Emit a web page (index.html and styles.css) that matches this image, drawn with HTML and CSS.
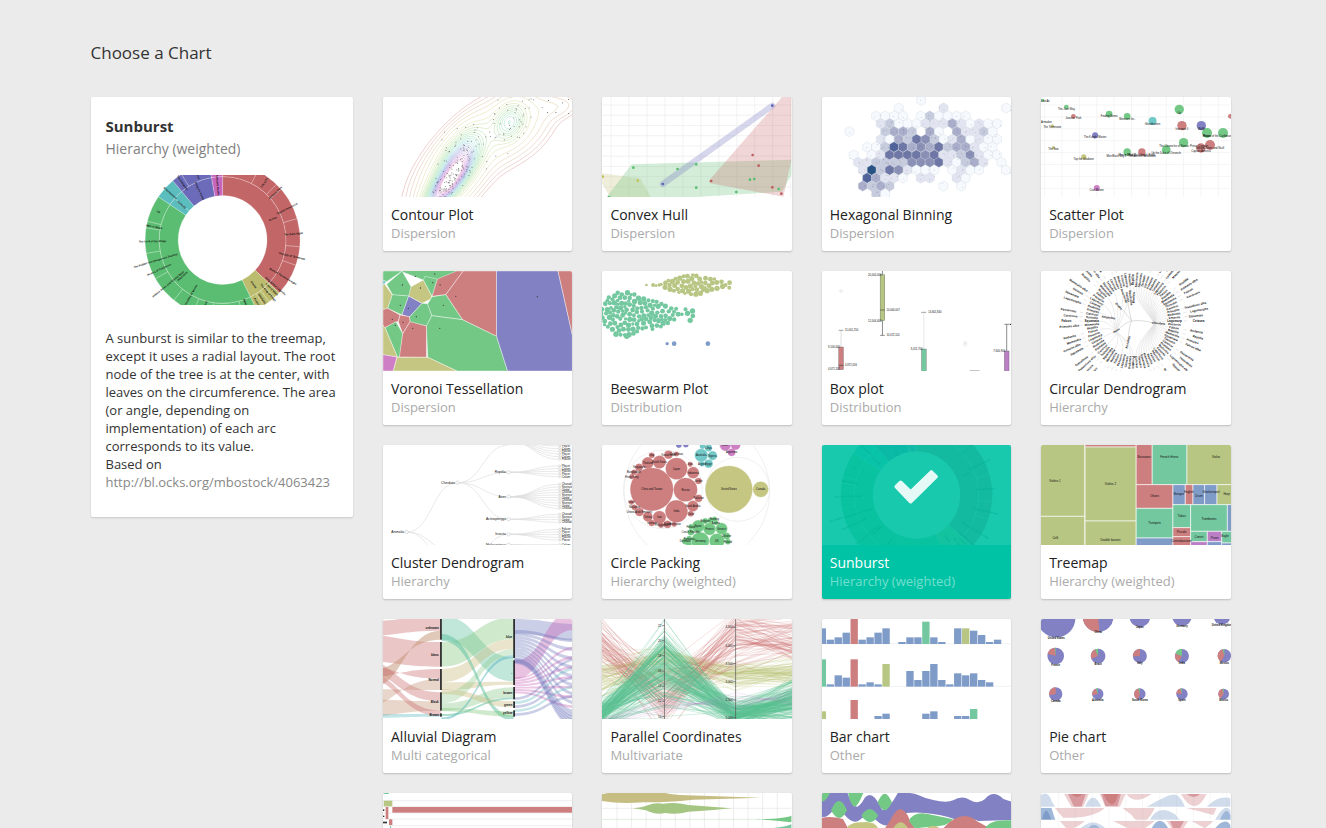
FILE: index.html
```html
<!DOCTYPE html>
<html lang="en">
<head>
<meta charset="utf-8">
<meta name="viewport" content="width=device-width, initial-scale=1">
<title>Choose a Chart</title>
<link rel="stylesheet" href="styles.css">
</head>
<body>
<main class="page">
  <div class="container">
    <h1 class="page-title">Choose a Chart</h1>
    <div class="layout">
      <aside class="detail">
        <h2 class="detail-title">Sunburst</h2>
        <p class="detail-category">Hierarchy (weighted)</p>
        <svg class="detail-chart" data-chart="sunburstLarge" viewBox="78 435 696 390" preserveAspectRatio="xMidYMid slice" aria-hidden="true"></svg>
        <p class="detail-text">A sunburst is similar to the treemap, except it uses a radial layout. The root node of the tree is at the center, with leaves on the circumference. The area (or angle, depending on implementation) of each arc corresponds to its value.<br>Based on <a class="detail-link" href="http://bl.ocks.org/mbostock/4063423">http://bl.ocks.org/mbostock/4063423</a></p>
      </aside>
      <div class="cards">
        <button type="button" class="card"><svg class="thumb" data-chart="contour" viewBox="9 21 567 300" preserveAspectRatio="none" aria-hidden="true"></svg><span class="card-body"><span class="card-title">Contour Plot</span><span class="card-category">Dispersion</span></span></button>
        <button type="button" class="card"><svg class="thumb" data-chart="hull" viewBox="666 21 567 300" preserveAspectRatio="none" aria-hidden="true"></svg><span class="card-body"><span class="card-title">Convex Hull</span><span class="card-category">Dispersion</span></span></button>
        <button type="button" class="card"><svg class="thumb" data-chart="hexbin" viewBox="12 21 567 300" preserveAspectRatio="none" aria-hidden="true"></svg><span class="card-body"><span class="card-title">Hexagonal Binning</span><span class="card-category">Dispersion</span></span></button>
        <button type="button" class="card"><svg class="thumb" data-chart="scatter" viewBox="669 21 567 300" preserveAspectRatio="none" aria-hidden="true"></svg><span class="card-body"><span class="card-title">Scatter Plot</span><span class="card-category">Dispersion</span></span></button>

        <button type="button" class="card"><svg class="thumb" data-chart="voronoi" viewBox="9 18 567 300" preserveAspectRatio="none" aria-hidden="true"></svg><span class="card-body"><span class="card-title">Voronoi Tessellation</span><span class="card-category">Dispersion</span></span></button>
        <button type="button" class="card"><svg class="thumb" data-chart="beeswarm" viewBox="666 18 567 300" preserveAspectRatio="none" aria-hidden="true"></svg><span class="card-body"><span class="card-title">Beeswarm Plot</span><span class="card-category">Distribution</span></span></button>
        <button type="button" class="card"><svg class="thumb" data-chart="boxplot" viewBox="12 18 567 300" preserveAspectRatio="none" aria-hidden="true"></svg><span class="card-body"><span class="card-title">Box plot</span><span class="card-category">Distribution</span></span></button>
        <button type="button" class="card"><svg class="thumb" data-chart="radial" viewBox="669 18 567 300" preserveAspectRatio="none" aria-hidden="true"></svg><span class="card-body"><span class="card-title">Circular Dendrogram</span><span class="card-category">Hierarchy</span></span></button>

        <button type="button" class="card"><svg class="thumb" data-chart="cluster" viewBox="9 15 567 300" preserveAspectRatio="none" aria-hidden="true"></svg><span class="card-body"><span class="card-title">Cluster Dendrogram</span><span class="card-category">Hierarchy</span></span></button>
        <button type="button" class="card"><svg class="thumb" data-chart="packing" viewBox="666 15 567 300" preserveAspectRatio="none" aria-hidden="true"></svg><span class="card-body"><span class="card-title">Circle Packing</span><span class="card-category">Hierarchy (weighted)</span></span></button>
        <button type="button" class="card card-selected" aria-pressed="true"><svg class="thumb" data-chart="sunburst" viewBox="12 15 567 300" preserveAspectRatio="none" aria-hidden="true"></svg><span class="card-overlay"><svg class="check" viewBox="229 90 132 102" aria-hidden="true"><path d="M236 140L249 127L279 156L341 96L355 110L279 185Z" fill="#e5f9f6" stroke="#e5f9f6" stroke-width="11" stroke-linejoin="round"/></svg></span><span class="card-body"><span class="card-title">Sunburst</span><span class="card-category">Hierarchy (weighted)</span></span></button>
        <button type="button" class="card"><svg class="thumb" data-chart="treemap" viewBox="669 15 567 300" preserveAspectRatio="none" aria-hidden="true"></svg><span class="card-body"><span class="card-title">Treemap</span><span class="card-category">Hierarchy (weighted)</span></span></button>

        <button type="button" class="card"><svg class="thumb" data-chart="alluvial" viewBox="9 15 567 300" preserveAspectRatio="none" aria-hidden="true"></svg><span class="card-body"><span class="card-title">Alluvial Diagram</span><span class="card-category">Multi categorical</span></span></button>
        <button type="button" class="card"><svg class="thumb" data-chart="parallel" viewBox="666 15 567 300" preserveAspectRatio="none" aria-hidden="true"></svg><span class="card-body"><span class="card-title">Parallel Coordinates</span><span class="card-category">Multivariate</span></span></button>
        <button type="button" class="card"><svg class="thumb" data-chart="bars" viewBox="12 15 567 300" preserveAspectRatio="none" aria-hidden="true"></svg><span class="card-body"><span class="card-title">Bar chart</span><span class="card-category">Other</span></span></button>
        <button type="button" class="card"><svg class="thumb" data-chart="pies" viewBox="669 15 567 300" preserveAspectRatio="none" aria-hidden="true"></svg><span class="card-body"><span class="card-title">Pie chart</span><span class="card-category">Other</span></span></button>

        <button type="button" class="card" aria-label="Gantt chart"><svg class="thumb" data-chart="gantt" viewBox="9 24 567 300" preserveAspectRatio="none" aria-hidden="true"></svg></button>
        <button type="button" class="card" aria-label="Area graph"><svg class="thumb" data-chart="area" viewBox="666 24 567 300" preserveAspectRatio="none" aria-hidden="true"></svg></button>
        <button type="button" class="card" aria-label="Streamgraph"><svg class="thumb" data-chart="stream" viewBox="12 24 567 300" preserveAspectRatio="none" aria-hidden="true"></svg></button>
        <button type="button" class="card" aria-label="Horizon graph"><svg class="thumb" data-chart="horizon" viewBox="669 24 567 300" preserveAspectRatio="none" aria-hidden="true"></svg></button>
      </div>
    </div>
  </div>
</main>
<script src="charts.js"></script>
</body>
</html>
```
FILE: styles.css
```css
* { box-sizing: border-box; }
body {
  margin: 0;
  background: #ebebeb;
  color: #333;
  font-family: "Open Sans", "Liberation Sans", sans-serif;
  font-size: 14px;
}
.page {
  height: 100vh;
  overflow: hidden;
  padding: 40px 20px 0 15px;
}
.container {
  max-width: 1140px;
  margin: 0 auto;
}
.page-title {
  margin: 0 0 31px;
  font-size: 17px;
  font-weight: 400;
  line-height: 26px;
}
.layout {
  display: grid;
  grid-template-columns: repeat(12, minmax(0, 1fr));
  column-gap: 30px;
  align-items: start;
}
.detail {
  grid-column: span 3;
  padding: 18px 15px 26px;
  background: #fff;
  border-radius: 2px;
  box-shadow: 0 1px 2px rgba(0, 0, 0, .15);
}
.detail-title {
  margin: 0;
  font-size: 15px;
  font-weight: 700;
  line-height: 22px;
}
.detail-category {
  margin: 0 0 14px;
  color: #808080;
  line-height: 24px;
}
.detail-chart {
  display: block;
  width: 100%;
  height: 130px;
}
.detail-text {
  margin: 24px 0 0;
  font-size: 13px;
  line-height: 18px;
}
.detail-link {
  color: #888;
  text-decoration: none;
}
.cards {
  grid-column: span 9;
  display: grid;
  grid-template-columns: repeat(4, minmax(0, 1fr));
  gap: 20px 30px;
}
.card {
  position: relative;
  display: flex;
  flex-direction: column;
  justify-content: flex-start;
  min-height: 154px;
  padding: 0;
  border: 0;
  border-radius: 2px;
  overflow: hidden;
  background: #fff;
  color: #222;
  font: inherit;
  text-align: left;
  box-shadow: 0 1px 2px rgba(0, 0, 0, .2);
  cursor: pointer;
}
.thumb {
  display: block;
  width: 100%;
  height: 100px;
}
.card-body {
  display: flex;
  flex-direction: column;
  padding: 8px;
  line-height: 19px;
}
.card-category {
  color: #aaa;
  font-size: 13px;
}
.card-selected {
  background: #00c3a5;
  color: #fff;
}
.card-selected .thumb { background: #fff; }
.card-selected .card-category { color: #73dfcf; }
.card-overlay {
  position: absolute;
  top: 0;
  left: 0;
  width: 100%;
  height: 100px;
  display: flex;
  align-items: center;
  justify-content: center;
  padding-bottom: 16px;
  background: rgba(0, 195, 165, .9);
}
.check {
  width: 44px;
  height: 34px;
}
text {
  font-family: "Liberation Sans", sans-serif;
  font-size: 10px;
  fill: #111;
}
```
FILE: charts.js
```js
// Draws the chart previews into every svg that has a data-chart attribute.
let seed = 7;
const rnd = () => (seed = (seed * 16807) % 2147483647) / 2147483647;
const gauss = () => rnd() + rnd() + rnd() + rnd() - 2;
const line = (x1, y1, x2, y2, c = '#e6e6e6', w = 2) => `<path d="M${x1} ${y1}L${x2} ${y2}" stroke="${c}" stroke-width="${w}" fill="none"/>`;
const circle = (x, y, r, f, extra = '') => `<circle cx="${x}" cy="${y}" r="${r}" fill="${f}" ${extra}/>`;
const rect = (x, y, w, h, f, extra = '') => `<rect x="${x}" y="${y}" width="${w}" height="${h}" fill="${f}" ${extra}/>`;
const poly = (pts, f, extra = '') => `<polygon points="${pts}" fill="${f}" ${extra}/>`;
const path = (d, f, extra = '') => `<path d="${d}" fill="${f}" ${extra}/>`;
const text = (x, y, s, anchor = 'middle', extra = '') => `<text x="${x}" y="${y}" text-anchor="${anchor}" ${extra}>${s}</text>`;
const polar = (cx, cy, r, a) => [cx + r * Math.sin(a * Math.PI / 180), cy - r * Math.cos(a * Math.PI / 180)];
const grid = (xs, ys, x0, y0, c = '#ececec') => xs.map(x => line(x, y0, x, y0 + 300, c)).join('') + ys.map(y => line(x0, y, x0 + 567, y, c)).join('');
const range = (a, b, s) => { const out = []; for (let v = a; v < b; v += s) out.push(v); return out; };
const RED = '#cd7e7f', GREEN = '#73c886', BLUE = '#8181c4', OLIVE = '#c6c683', TEAL = '#73c8c8', MINT = '#73c8a0', STEEL = '#7f9bc8', PINK = '#cd81c4', LIME = '#b7c683', PLUM = '#bb7fc6';

function arc(cx, cy, r0, r1, a0, a1, fill, extra = '') {
  const big = a1 - a0 > 180 ? 1 : 0;
  const [ax, ay] = polar(cx, cy, r1, a0), [bx, by] = polar(cx, cy, r1, a1);
  const [qx, qy] = polar(cx, cy, r0, a1), [dx, dy] = polar(cx, cy, r0, a0);
  return path(`M${ax} ${ay}A${r1} ${r1} 0 ${big} 1 ${bx} ${by}L${qx} ${qy}A${r0} ${r0} 0 ${big} 0 ${dx} ${dy}Z`, fill, extra);
}
function radialText(cx, cy, r, a, s, size = 10) {
  const [x, y] = polar(cx, cy, r, a);
  return text(x, y + 3, s, 'middle', `transform="rotate(${a > 180 ? a + 90 : a - 90} ${x} ${y})" style="font-size:${size}px;font-weight:700"`);
}
function sunburst(cx, cy, k) {
  const groups = [[0, 133, '#c36667'], [133, 154, '#bcbc6f'], [154, 304, '#5bbd71'], [304, 320, '#5bbdbd'], [320, 350, '#6b6bb9'], [350, 360, '#c667bd']];
  let s = '';
  for (const [a, b, c] of groups) s += arc(cx, cy, 133 * k, 190 * k, a, b, c, 'stroke="#fff" stroke-opacity=".35" stroke-width="2"') + arc(cx, cy, 190 * k, 232 * k, a, b, c, 'stroke="#fff" stroke-opacity=".35" stroke-width="2"');
  for (const a of [27, 44, 49, 74, 95, 109, 138, 143, 148, 165, 188, 202, 219, 240, 260, 279, 284, 328]) {
    const p = polar(cx, cy, 190 * k, a), q = polar(cx, cy, 232 * k, a);
    s += line(p[0], p[1], q[0], q[1], '#ffffff99');
  }
  s += line(...polar(cx, cy, 133 * k, 311), ...polar(cx, cy, 190 * k, 311), '#ffffff99');
  const labels = [[36, 212, 'Life of Pi'], [48, 212, 'Jurassic Park'], [64, 214, 'Captain America II'], [67, 163, 'Action'], [85, 213, 'The Dark Night'], [103, 213, 'The Day of Tomorrow'], [121, 211, 'Batman The Dark Knight'], [131, 210, 'King Arthur Legends'], [135, 209, 'Lord of Wars'], [139, 208, 'The King of Kings'], [145, 163, 'Drama'], [146, 212, 'Gladiator'], [151, 215, 'Australia'], [160, 200, 'Avatar'], [195, 195, 'Up'], [210, 194, 'Chronicles of Narnia'], [228, 162, 'Adventure'], [231, 210, 'Indiana Jones and Crystal Skull'], [245, 210, 'Pirates of Caribbean'], [253, 210, 'The Hobbit: An Unexpected Journey'], [269, 210, 'The Lord of the Rings'], [281, 208, 'Men in Black'], [294, 210, 'Up'], [312, 210, 'Ghostbusters'], [311, 162, 'Comedy'], [325, 209, 'The Hangover'], [335, 162, 'Kung Fu Panda'], [339, 206, 'Shrek'], [355, 165, 'Fantastic Beasts']];
  for (const [a, r, t] of labels) s += radialText(cx, cy, r * k, a, t, 8);
  return s;
}

const charts = {
  sunburstLarge: () => sunburst(427, 630, 1),
  sunburst: () => sunburst(295, 165, .98),

  contour() {
    const bumps = [[195, 290, 58, 22, -52, 1.1], [240, 208, 60, 30, -60, .8], [225, 240, 92, 46, -52, .32], [388, 95, 36, 26, -65, .45], [388, 108, 78, 50, -38, .22], [535, 50, 42, 22, -10, .05]];
    const f = (x, y) => bumps.reduce((sum, [cx, cy, a, b, t, w]) => {
      const c = Math.cos(t * Math.PI / 180), n = Math.sin(t * Math.PI / 180), u = (x - cx) * c + (y - cy) * n, v = (y - cy) * c - (x - cx) * n;
      return sum + w * Math.exp(-(u * u / a / a + v * v / b / b) / 2);
    }, 0);
    let s = '';
    const step = 9;
    for (let i = 0; i < 26; i++) {
      const level = i < 6 ? .018 * Math.pow(1.6, i) : .19 + (i - 5) * .06;
      let d = '';
      for (let x = 0; x < 590; x += step) for (let y = 12; y < 330; y += step) {
        const p = [[x, y], [x + step, y], [x + step, y + step], [x, y + step]], v = p.map(q => f(...q) - level), cuts = [];
        for (let e = 0; e < 4; e++) {
          const g = (e + 1) % 4;
          if (v[e] * v[g] < 0) { const t = v[e] / (v[e] - v[g]); cuts.push(`${(p[e][0] + t * (p[g][0] - p[e][0])).toFixed(1)} ${(p[e][1] + t * (p[g][1] - p[e][1])).toFixed(1)}`); }
        }
        if (cuts.length > 1) d += `M${cuts[0]}L${cuts[1]}`;
      }
      s += path(d, 'none', `stroke="hsl(${i * 13},50%,60%)" stroke-opacity=".45" stroke-width="2"`);
    }
    for (let i = 0; i < 220; i++) {
      const [cx, cy, a, b] = i < 110 ? [205, 275, 70, 22] : i < 165 ? [240, 180, 75, 50] : [385, 105, 110, 55];
      const u = gauss() * a, v = gauss() * b;
      s += rect((cx + u * .6 + v * .8).toFixed(0), (cy - u * .8 + v * .6).toFixed(0), 3, 3, '#333', 'opacity=".5"');
    }
    return s + [[503, 30], [525, 66], [545, 37], [563, 27], [563, 69], [500, 66]].map(p => rect(p[0], p[1], 3, 3, '#777')).join('');
  },

  hull() {
    let s = grid(range(693, 1233, 53.8), range(45, 321, 30.7), 666, 21);
    s += poly('666,250 780,265 812,321 690,321 666,280', '#c6c683', 'opacity=".3"');
    s += poly('755,223 1233,209 1233,255 1205,305 950,321 680,321', '#6cc47f', 'opacity=".3"');
    s += poly('985,273 1205,21 1233,21 1233,210 1209,320 990,280', '#c86668', 'opacity=".27"');
    s += '<path d="M848 282L1176 47" stroke="#8181c4" stroke-opacity=".32" stroke-width="18" stroke-linecap="round"/>';
    for (const p of [[760, 233], [892, 237], [948, 223], [948, 293], [1068, 306], [1109, 269], [1122, 267], [1195, 297], [687, 321]]) s += circle(...p, 4, '#54be6d');
    for (const p of [[1117, 195], [1135, 227], [1176, 292], [1203, 311], [993, 273]]) s += circle(...p, 4, '#be5a5c');
    return s + circle(848, 282, 4, '#5e5eb4') + circle(1176, 47, 4, '#5e5eb4') + circle(668, 260, 4, '#c2c255') + circle(773, 272, 4, '#c2c255');
  },

  hexbin() {
    const shades = ['', '#f6faff', '#e2e5f1', '#c6cbde', '#aaaecb', '#8b90b7', '#6e77a6', '#50639a', '#295284'];
    const rows = [[31, 309, '1'], [54, 242, '1....2......1'], [78, 174, '1111.131111'], [101, 188, '23111222421211'], [125, 94, '1...3443.41.42231'], [148, 188, '21436531241211'], [171, 147, '113764546344211'], [195, 107, '1.126666562235211'], [217, 120, '223333555621342.1'], [240, 134, '283652111.1211..1'], [264, 147, '74221.22..21'], [288, 134, '4343.....1.1'], [311, 174, '31']];
    let s = '';
    for (const [y, x0, cells] of rows) [...cells].forEach((c, i) => {
      if (c === '.') return;
      const x = x0 + i * 26.8;
      s += poly([0, 60, 120, 180, 240, 300].map(a => polar(x, y, 15.5, a).map(v => v.toFixed(1)).join(',')).join(' '), shades[c], 'stroke="#ccd6da" stroke-width="1"');
      for (let n = 0; n < Math.min(+c, 3); n++) s += rect((x + gauss() * 11).toFixed(0), (y + gauss() * 10).toFixed(0), 2, 2, '#555', 'opacity=".5"');
    });
    return s;
  },

  scatter() {
    let s = grid(range(680, 1236, 52), range(45, 321, 35.7), 669, 21, '#f0f0f0');
    const dots = [[674, 31, 5, GREEN, 'The Last Ati'], [745, 51, 7, GREEN, 'The Jazz Way'], [766, 79, 7, RED, 'Jurassic Park'], [873, 72, 10, GREEN, 'Finding Nemo'], [927, 79, 10, GREEN, 'Monsters Inc.'], [1083, 58, 14, GREEN, 'Up'], [1003, 93, 12, TEAL, 'Ghostbusters'], [1091, 107, 14, RED, 'Iron man II'], [1149, 107, 14, BLUE, 'WallE'], [1236, 79, 7, RED, ''], [703, 108, 5, OLIVE, 'The Terminator'], [831, 136, 9, BLUE, 'The Kungfu Master'], [706, 173, 5, OLIVE, 'The Vow'], [797, 201, 8, OLIVE, 'Top the Gladiator'], [927, 186, 11, GREEN, 'Men in Black 3'], [971, 186, 11, RED, 'The Dark Knight Rises'], [1044, 179, 13, GREEN, 'Up the Duke of Chronicle'], [1096, 158, 14, GREEN, 'The Chronicles of Narnia: Prince Caspian'], [1166, 129, 15, GREEN, 'Brave'], [1214, 129, 15, GREEN, 'Pirates of the Caribbean: Stranger'], [1148, 174, 14, RED, 'Captain America'], [1175, 165, 15, RED, 'Indiana Jones and Skull'], [836, 294, 9, PINK, 'Cast Master']];
    for (const [x, y, r, c] of dots) s += circle(x, y, r, c);
    for (const [x, y, r, , t] of dots) if (t) s += text(x, y + r * .7 + 3, t, 'middle', 'style="font-size:8px"');
    return s + text(669, 98, 'Armadon', 'start', 'style="font-size:8px"') + text(865, 202, 'Men Black Sky 2 : The Ancient Revolution', 'start', 'style="font-size:8px"');
  },

  voronoi() {
    const e = 'stroke="#ffffff" stroke-opacity=".6" stroke-width="2"';
    const cells = [['0,10 250,10 200,38 155,92 130,45 60,18 9,55', GREEN], ['9,18 66,18 20,50 9,45', GREEN], ['66,18 20,58 38,90 90,94 93,65', GREEN], ['9,50 37,90 23,130 9,136', OLIVE], ['37,89 86,93 66,150 23,130', GREEN], ['86,93 126,115 88,156 66,149', BLUE], ['93,65 130,45 155,93 152,102 126,115 86,93', OLIVE], ['130,45 135,34 172,42 156,94', GREEN], ['172,42 230,18 249,18 197,89 156,94', RED], ['249,18 349,18 349,214 247,164 197,89', RED], ['156,95 197,89 247,164 155,152 142,118', GREEN], ['126,115 142,116 155,152 140,183 90,172 88,156', GREEN], ['155,152 247,164 349,214 382,318 230,318 143,277 139,183', GREEN], ['349,18 533,18 576,210 576,318 382,318 349,214', BLUE], ['533,18 576,18 576,210', RED], ['9,134 23,130 60,150 55,168 15,188 9,190', RED], ['60,150 88,155 90,170 68,206 55,170', RED], ['15,188 48,170 68,206 60,276 52,276', GREEN], ['9,180 15,188 52,276 9,270', OLIVE], ['68,206 90,170 139,183 139,277 58,276', RED], ['9,269 51,276 40,318 9,318', '#cd7ec4'], ['51,277 143,277 230,318 40,318', OLIVE], ['9,46 20,50 9,60', TEAL]];
    let s = cells.map(([p, c]) => poly(p, c, e)).join('');
    for (const p of [[106, 34], [164, 27], [67, 60], [121, 69], [158, 53], [180, 60], [227, 94], [471, 95], [61, 121], [85, 130], [190, 121], [109, 155], [37, 163], [69, 172], [46, 181], [98, 190], [179, 190]]) s += circle(...p, 2, '#444');
    return s;
  },

  beeswarm() {
    let s = '';
    const swarm = (inside, color, x0, x1, y0, y1) => {
      const put = [];
      for (const size of [7, 6, 5]) for (let i = 0; i < 9000; i++) {
        const x = x0 + rnd() * (x1 - x0), y = y0 + rnd() * (y1 - y0), r = size + rnd() * 1;
        if (inside(x, y) && (size < 7 || put.length < 55) && put.every(p => Math.hypot(p[0] - x, p[1] - y) > p[2] + r - 2)) { put.push([x, y, r]); s += circle(x.toFixed(1), y.toFixed(1), r.toFixed(1), color); }
      }
    };
    const edge = (pts, x) => { for (let i = 1; i < pts.length; i++) if (x <= pts[i][0]) { const [a, b] = [pts[i - 1], pts[i]]; return a[1] + (b[1] - a[1]) * (x - a[0]) / (b[0] - a[0]); } return 145; };
    const top = [[660, 125], [700, 82], [750, 80], [810, 102], [880, 132], [905, 145]], bottom = [[660, 165], [700, 208], [745, 215], [790, 190], [840, 188], [905, 150]];
    swarm((x, y) => y > edge(top, x) && y < edge(bottom, x), MINT, 660, 905, 75, 220);
    swarm((x, y) => Math.abs(x - 940) / 92 + ((y - 59) / 30) ** 2 < 1 || (((x - 930) / 68) ** 2 + ((y - 59) / 27) ** 2 < 1), LIME, 840, 1040, 28, 90);
    for (const p of [[916, 133, 6], [922, 145, 8], [937, 138, 8], [938, 153, 7], [930, 166, 8], [740, 214, 8], [708, 208, 8], [817, 192, 6], [888, 131, 6]]) s += circle(...p, MINT);
    for (const p of [[799, 60, 4], [819, 60, 6], [828, 62, 4], [837, 60, 5], [843, 58, 5], [1036, 60, 6], [1048, 53, 7], [1047, 68, 6]]) s += circle(...p, LIME);
    return s + circle(861, 236, 5, STEEL) + circle(882, 236, 7, STEEL) + circle(983, 236, 7, STEEL);
  },

  boxplot() {
    const b = (x, y, h, c) => rect(x, y, 14, h, c, 'stroke="#555" stroke-width="1"');
    const t = (x, y, s) => text(x, y, s, 'start', 'style="font-size:8px"');
    let s = line(193, 18, 193, 211, '#555') + line(186, 211, 200, 211, '#555') + line(69, 196, 69, 246, '#ccc') + line(62, 196, 76, 196, '#777') + line(317, 142, 317, 252, '#ddd') + line(309, 142, 324, 142, '#777') + line(565, 178, 565, 258, '#555') + line(558, 178, 572, 178, '#555');
    s += b(186, 29, 138, LIME) + b(62, 246, 68, RED) + b(310, 252, 70, MINT) + b(558, 258, 62, PLUM) + line(186, 135, 200, 135, '#444') + line(62, 301, 76, 301, '#444');
    s += t(150, 32, '20,000,000') + t(150, 170, '12,004,400') + t(205, 138, '14,000,007') + t(205, 214, '10,072,114') + t(81, 199, '11,001,250') + t(330, 145, '14,601,840') + t(30, 249, '9,106,002') + t(30, 316, '4,672,107') + t(81, 304, '4,872,056') + t(278, 255, '8,411,700') + t(525, 260, '7,600,900') + line(574, 178, 579, 178, '#333', 4) + line(454, 317, 484, 317, '#999');
    for (const p of [[69, 78], [441, 233], [441, 239]]) s += circle(...p, 4, 'none', 'stroke="#ddd" stroke-width="2"');
    return s;
  },

  radial() {
    const names = ['Reptilia', 'Mammalia', 'Squamata', 'Testudines', 'Carnivora', 'Primates', 'Rodentia', 'Cetacea', 'Lagomorpha', 'Passerines', 'Falcon'];
    const cx = 945, cy = 168;
    let s = '';
    for (let i = 0; i < 76; i++) {
      const a = i * 360 / 76, end = polar(cx, cy, 103, a), hub = a < 180 ? [1010, 175] : [895, 200], ctrl = polar(cx, cy, 72, a);
      if (a < 185 || i % 3 === 0) s += path(`M${hub}Q${ctrl} ${end}`, 'none', 'stroke="#e2e2e2" stroke-width="2"');
      s += radialText(cx, cy, 124, a, names[i % 11].slice(0, 8), 9);
      if (a > 15 && a < 345 && i % 5) s += radialText(cx, cy, 184 + (i * 7 % 5) * 4, a, names[(i * 5) % 11] + (i % 4 ? '' : ' alba'), 9) + line(...polar(cx, cy, 152, a), ...polar(cx, cy, 162, a), '#ddd');
    }
    s += [[1010, 175], [895, 200], [905, 125], [930, 230], [925, 85]].map(p => path(`M940 168Q${(940 + p[0]) / 2 - 4} ${(168 + p[1]) / 2 - 8} ${p}`, 'none', 'stroke="#ccc" stroke-width="2"')).join('');
    for (const [r, a, t] of [[75, 278, 'Amphibia'], [80, 340, 'Arachnida'], [74, 347, 'Insecta'], [70, 354, 'Squid alba'], [70, 1, 'Bivalvia'], [62, 316, 'Crabs'], [58, 240, 'Aves'], [66, 194, 'Annelida'], [76, 95, 'Chordata']]) s += radialText(cx, cy, r, a, t, 9);
    return s;
  },

  cluster() {
    const link = (x1, y1, x2, y2) => path(`M${x1} ${y1}C${(x1 + x2) / 2} ${y1} ${(x1 + x2) / 2} ${y2} ${x2} ${y2}`, 'none', 'stroke="#dedede" stroke-width="2"');
    const node = (x, y, r = 5) => circle(x, y, r, '#fff', 'stroke="#ccc" stroke-width="2"');
    let s = link(80, 276, 232, 128) + link(80, 276, 232, 400) + link(80, 276, 215, 330) + link(232, 128, 385, 15) + link(232, 128, 385, 97) + link(232, 128, 385, 170) + link(232, 128, 385, 238) + link(232, 400, 385, 283);
    for (const [py, a, b] of [[5, 18, 64], [97, 78, 116], [170, 133, 210], [238, 223, 254], [283, 268, 302], [314, 314, 330]]) for (let y = a; y <= b; y += 8) {
      s += link(385, py, 538, y) + node(538, y, 3) + text(544, y + 3, ['Plocei', 'Charad', 'Colum', 'Sturnus', 'Falcon', 'Otidid'][Math.round(y) % 6], 'start', 'style="font-size:9px"');
    }
    for (const [x, y, t] of [[80, 276, 'Animalia'], [232, 128, 'Chordata'], [385, 97, 'Reptilia'], [385, 170, 'Aves'], [385, 238, 'Actinopterygii'], [385, 283, 'Insecta'], [385, 314, 'Malacostraca']]) s += node(x, y) + text(x - 8, y + 3, t, 'end');
    return s;
  },

  packing() {
    const ring = (x, y, r) => circle(x, y, r, 'none', 'stroke="#e8e8e8" stroke-width="2"');
    let s = ring(950, 155, 218) + ring(848, 148, 118) + ring(1072, 148, 96);
    const set = [[815, 148, 64, RED, 'China and Taiwan'], [889, 86, 32, RED, 'Japan'], [916, 149, 35, RED, 'Russia'], [889, 214, 33, RED, 'India'], [838, 66, 19, RED, 'South Korea'], [803, 69, 17, RED, 'Thailand'], [939, 98, 17, RED, 'Indonesia'], [938, 198, 16, RED, 'Saudi Arabia'], [838, 232, 19, RED, 'Iran'], [803, 230, 14, RED, 'Turkey'], [865, 44, 12, RED, 'Kazakhstan'], [889, 42, 7, RED, 'Uzbekistan'], [815, 46, 8, RED, 'Iraq'], [777, 82, 11, RED, 'Singapore'], [762, 97, 8, RED, 'Bangladesh'], [755, 110, 7, RED, 'Hong Kong'], [930, 73, 7, RED, 'Iran'], [955, 123, 9, RED, 'Jordan'], [955, 175, 11, RED, 'Pakistan'], [932, 221, 8, RED, 'Qatar'], [778, 216, 12, RED, 'United Arab Emirates'], [763, 202, 8, RED, 'Malaysia'], [754, 187, 7, RED, 'Israel'], [815, 249, 9, RED, 'Vietnam'], [843, 255, 8, RED, 'Philippines'], [862, 253, 11, RED, 'Egypt'], [882, 253, 7, RED, 'Uzbekistan'], [1046, 148, 70, OLIVE, 'United States'], [1141, 148, 23, OLIVE, 'Canada'], [963, 46, 19, TEAL, 'Australia'], [997, 47, 13, TEAL, 'Nigeria'], [985, 71, 12, TEAL, 'Egypt'], [966, 72, 7, TEAL, 'Algeria'], [985, 24, 10, TEAL, 'Libya'], [967, 18, 8, TEAL, ''], [1035, 16, 16, PINK, 'Brazil'], [1066, 15, 14, PINK, ''], [1054, 37, 11, PINK, 'Argentina'], [896, 15, 8, BLUE, ''], [917, 14, 8, BLUE, ''], [954, 259, 18, GREEN, 'Spain'], [988, 267, 18, GREEN, 'France'], [1024, 266, 17, GREEN, 'Greece'], [960, 303, 26, GREEN, 'Germany'], [1010, 303, 22, GREEN, 'UK'], [1039, 288, 10, GREEN, 'Ukraine'], [1043, 305, 8, GREEN, 'Poland'], [975, 243, 8, GREEN, 'Belgium'], [991, 241, 8, GREEN, ''], [1003, 237, 7, GREEN, 'Norway'], [1007, 248, 7, GREEN, 'Austria'], [932, 277, 9, GREEN, 'Czech Republic'], [932, 260, 7, GREEN, 'Finland'], [927, 296, 8, GREEN, 'Romania'], [915, 304, 9, GREEN, 'Denmark'], [926, 311, 8, GREEN, '']];
    for (const [x, y, r, c] of set) s += circle(x, y, r, c, `stroke="${c}"`);
    for (const [x, y, , , t] of set) if (t) s += text(x, y + 3, t, 'middle', 'style="font-size:8px"');
    return s;
  },

  treemap() {
    const cells = [[660, 10, 140, 219, LIME, 'Violins 1', 711, 126], [660, 229, 140, 100, LIME, 'Celli', 712, 297], [801, 10, 153, 11, RED], [801, 21, 153, 222, LIME, 'Violins 2', 877, 135], [801, 243, 153, 80, LIME, 'Double basses', 877, 303], [954, 10, 48, 124, RED, 'Bassoons', 978, 54], [1002, 10, 104, 124, MINT, 'French Horns', 1053, 54], [1106, 10, 140, 124, LIME, 'Violas', 1193, 54], [954, 134, 110, 71, RED, 'Oboes', 1009, 172], [954, 205, 110, 89, MINT, 'Trumpets', 1009, 252], [954, 294, 110, 30, STEEL], [1064, 134, 37, 60, STEEL, 'Bongos', 1082, 166], [1101, 134, 23, 60, RED, 'English', 1112, 160], [1124, 134, 35, 60, STEEL, 'Drum', 1142, 172], [1159, 134, 37, 60, STEEL, 'Glockenspiel', 1178, 160], [1196, 134, 45, 60, LIME, 'Harp', 1225, 166], [1064, 194, 53, 69, MINT, 'Tubas', 1090, 231], [1064, 263, 53, 27, RED, 'Piccolo', 1090, 279], [1064, 290, 53, 30, RED, 'Contrabassoon', 1090, 305], [1117, 194, 110, 80, MINT, 'Trombones', 1172, 241], [1227, 194, 20, 80, STEEL], [1117, 274, 50, 31, MINT, 'Cornet', 1142, 293], [1167, 274, 43, 31, PLUM, 'Piano', 1189, 296], [1210, 274, 30, 35, MINT, 'Bugle', 1220, 290], [1117, 305, 50, 20, PLUM], [1167, 305, 43, 20, STEEL], [1210, 309, 30, 20, STEEL]];
    return cells.map(c => rect(c[0], c[1], c[2], c[3], c[4], 'stroke="#fff" stroke-opacity=".6" stroke-width="3"')).join('') + cells.filter(c => c[5]).map(c => text(c[6], c[7], c[5], 'middle', 'style="font-size:9px"')).join('');
  },

  alluvial() {
    const rib = (x1, a, b, x2, c, d, col, o = .38) => { const m = (x1 + x2) / 2; return path(`M${x1} ${a}C${m} ${a} ${m} ${c} ${x2} ${c}L${x2} ${d}C${m} ${d} ${m} ${b} ${x1} ${b}Z`, col, `opacity="${o}"`); };
    const R = '#c8696b', S = '#c49476', G = '#7fc47a', M = '#5bbf9f', O = '#c8b878', V = '#6b74b9', P = '#c65fb4', C = '#5bb8c0';
    let s = rib(-60, 22, 66, 182, 8, 50, R) + rib(-80, 60, 140, 182, 84, 158, R) + rib(-90, 125, 160, 182, 235, 262, R) + rib(-40, 225, 170, 182, 50, 77, S, .5) + rib(-90, 290, 225, 182, 194, 228, S) + rib(-90, 255, 310, 182, 262, 290, S) + rib(-80, 300, 312, 182, 300, 308, C) + rib(-70, 165, 185, 182, 290, 306, R) + rib(-90, 195, 150, 182, 165, 194, R);
    s += rib(184, 5, 77, 400, 130, 202, M) + rib(184, 84, 158, 400, 10, 75, G) + rib(184, 165, 205, 400, 75, 105, O) + rib(184, 205, 228, 400, 203, 212, O) + rib(184, 235, 268, 400, 105, 123, G, .3) + rib(184, 268, 290, 400, 220, 250, G, .35) + rib(184, 310, 318, 400, 123, 132, C, .5) + rib(184, 60, 80, 400, 305, 320, M, .5) + rib(184, 225, 240, 400, 262, 280, O) + rib(184, 282, 292, 400, 292, 308, G) + rib(184, 300, 306, 400, 250, 256, M, .5);
    s += rib(402, 15, 60, 600, 30, 80, V, .35) + rib(402, 140, 195, 580, -10, 48, P, .38);
    for (let i = 0; i < 9; i++) s += rib(402, 48 + i * 9, 57 + i * 9, 600, 75 + i * 27, 85 + i * 27, V, .35);
    for (let i = 0; i < 7; i++) s += rib(402, 190 + i * 7, 196 + i * 7, 600, 95 + i * 30, 103 + i * 30, P, .35);
    for (let i = 0; i < 5; i++) s += rib(402, 250 + i * 12, 258 + i * 12, 600, 130 + i * 28, 138 + i * 28, i % 2 ? C : V, .35) + rib(402, 130 + i * 3, 137 + i * 3, 600, 300 + i * 9, 312 + i * 9, V, .35);
    for (const [y, e] of [[10, 77], [84, 158], [165, 228], [235, 290], [298, 308]]) s += rect(180, y, 5, e - y, '#222');
    for (const [y, e] of [[10, 132], [139, 213], [219, 256], [262, 282], [289, 308]]) s += rect(399, y, 5, e - y, '#222');
    for (const [x, y, t] of [[176, 44, 'unknown'], [176, 125, 'blanc'], [176, 200, 'Normal'], [176, 266, 'Black'], [176, 306, 'Brown'], [396, 71, 'blue'], [396, 241, 'brown'], [396, 276, 'green'], [396, 301, 'yellow'], [396, 179, '-']]) s += text(x, y, t, 'end', 'style="font-size:9px;font-weight:700"');
    return s;
  },

  parallel() {
    let s = '';
    const l = (ys, c, o) => path(`M630 ${ys[0]}L853 ${ys[1]}L1066 ${ys[2]}L1280 ${ys[3]}`, 'none', `stroke="${c}" stroke-opacity="${o}" stroke-width="2"`);
    for (let i = 0; i < 75; i++) s += l([200 + gauss() * 60, 150 + gauss() * 70, 180 + gauss() * 40, 170 + gauss() * 50].map(Math.round), '#bcc67c', .32);
    for (let i = 0; i < 75; i++) s += l([60 + gauss() * 70, 255 + gauss() * 65, 60 + gauss() * 75, 85 + gauss() * 75].map(Math.round), '#cc6e70', .3);
    for (let i = 0; i < 190; i++) s += l([325 + gauss() * 40, 150 + gauss() * 100, 300 + gauss() * 35, 245 + gauss() * 70].map(Math.round), '#5cc295', .38);
    for (let i = 0; i < 7; i++) s += l([330, 250 + i * 8, 290 - i * 9, 210 + i * 12], '#b67cc6', .25);
    s += line(853, 15, 853, 315, '#555') + line(1066, 15, 1066, 315, '#555');
    [35, 80, 125, 171, 217, 262, 308].forEach((y, i) => { s += line(846, y, 853, y, '#555') + text(844, y + 3, 22 - i * 2, 'end', 'style="font-size:9px"'); });
    [40, 95, 149, 203, 258, 311].forEach((y, i) => { s += line(1059, y, 1066, y, '#555') + text(1058, y + 3, (4.5 - i * .5).toFixed(1) + '00', 'end', 'style="font-size:9px"'); });
    return s;
  },

  bars() {
    let s = line(12, 89, 579, 89, '#e8ebf2') + line(12, 217, 579, 217, '#e8ebf2');
    const rows = [[90, [47, 13, 20, 34, 80, 13, 20, 34, 47, 0, 6, 20, 20, 67, 20, 6, 0, 47, 47, 40, 27, 6, 13], { 4: RED, 13: MINT, 18: LIME }], [218, [82, 7, 34, 27, 82, 7, 13, 7, 68, 0, 0, 47, 20, 47, 68, 20, 7, 40, 34, 40, 20, 13], { 0: MINT, 4: RED, 8: LIME }], [315, [23, 0, 0, 0, 57, 0, 0, 9, 16, 0, 0, 0, 0, 16, 23, 0, 0, 9, 9, 30], { 0: LIME, 4: RED, 19: MINT }]];
    for (const [base, hs, hi] of rows) hs.forEach((h, i) => { if (h) s += rect(2 + i * 23.85, base - h, 22, h, hi[i] || STEEL); });
    return s;
  },

  pies() {
    let s = '';
    const pie = (x, y, r, a, b, t) => { s += circle(x, y, r, BLUE) + (a < 360 ? arc(x, y, 0, r, a, b, RED) + (b < 360 ? arc(x, y, 0, r, b, 360, GREEN) : '') : '') + text(x, y + r + 4, t, 'middle', 'style="font-size:8px;font-weight:700"'); };
    pie(715, 13, 57, 360, 360, 'United States'); pie(840, 8, 46, 175, 360, 'China'); pie(965, 8, 31, 360, 360, 'Japan'); pie(1091, 7, 29, 360, 360, 'Germany'); pie(1211, 7, 25, 360, 360, 'United Kingdom');
    pie(713, 126, 25, 285, 353, 'France'); pie(840, 126, 22, 245, 335, 'Brazil'); pie(965, 126, 21, 265, 360, 'Italy'); pie(1091, 126, 21, 210, 292, 'India'); pie(1218, 125, 20, 210, 345, 'Mexico');
    pie(713, 240, 20, 260, 360, 'Canada'); pie(839, 240, 17, 255, 340, 'Australia'); pie(965, 240, 17, 195, 345, 'South Korea'); pie(1091, 240, 17, 275, 345, 'Spain'); pie(1216, 240, 16, 215, 345, 'Mexico');
    return s;
  },

  gantt() {
    return [47, 64, 84, 102, 122].map(y => line(9, y, 576, y)).join('') + rect(9, 22, 17, 5, MINT) + rect(11, 47, 26, 17, LIME) + rect(37, 66, 540, 17, RED) + rect(17, 66, 8, 36, RED) + rect(27, 103, 10, 17, RED) + rect(30, 122, 3, 10, MINT) + rect(9, 73, 4, 5, '#333') + rect(9, 92, 4, 4, '#333') + rect(9, 110, 12, 5, '#333');
  },
  area() {
    return grid(range(711, 1233, 43.6), [70], 666, 24, '#e6e6e6') + path('M666 27Q690 22 720 22L845 22Q870 28 900 30L1140 38L940 44Q850 53 790 52Q720 58 666 48Z', '#c6bd83') + path('M757 70Q790 67 805 60Q820 52 850 56Q885 50 925 60L1053 70L1000 75L925 80Q890 90 855 84Q830 90 808 80Q795 74 757 70Z', '#a5c683') + line(666, 103, 1140, 103, '#cfe8d2') + path('M1125 103Q1210 102 1233 92L1233 112Q1200 106 1125 103Z', GREEN) + path('M1180 128Q1215 127 1233 118L1233 132Z', MINT);
  },
  stream() {
    return path('M12 24H250Q285 22 300 30Q320 40 345 45Q385 55 405 46Q430 30 455 45Q480 60 500 42Q525 12 555 42L579 50V105Q530 106 480 108Q440 92 410 103Q370 88 320 84Q270 80 240 90Q215 135 185 115Q150 80 125 105Q105 120 80 90Q60 60 40 82Q25 100 12 95Z', BLUE) + path('M88 22Q100 65 118 65Q130 58 140 38Q155 22 170 38Q180 50 192 74Q210 78 240 22Z', '#fff') + path('M12 24H36Q24 50 12 50Z', GREEN) + path('M90 22H136Q120 66 108 65Q95 55 90 22Z', GREEN) + path('M179 52Q200 0 221 52Q200 100 179 52Z', GREEN) + path('M39 76Q63 20 87 76Q64 122 39 76Z', GREEN) + path('M130 92Q155 52 180 92Q157 130 130 92Z', GREEN) + path('M12 98Q40 92 75 102L90 130H12Z', RED) + path('M200 130Q215 110 225 90Q247 55 268 90Q275 110 290 130Z', RED) + path('M85 130Q95 112 130 112Q170 106 180 130Z', OLIVE) + path('M225 130Q248 94 270 130Z', OLIVE) + path('M272 108Q285 80 325 86L405 103Q390 125 340 125L290 130Z', GREEN) + path('M375 130Q430 70 475 108L515 130Z', RED) + path('M500 130Q515 102 579 106V130Z', GREEN) + path('M325 130Q345 114 365 130Z', OLIVE);
  },
  horizon() {
    const LR = '#ecd0d2', DR = '#d89a9e', LB = '#d0dceb', DB = '#9fb8d9';
    let s = path('M669 30Q690 15 702 50L712 66H669Z', LB) + path('M738 27H812L795 66H760Z', LR) + path('M750 27H803L790 66H768Z', DR) + path('M760 27H793Q778 45 760 27Z', RED) + path('M800 66Q825 10 850 66Z', LB) + path('M845 27H922L905 66H862Z', LR) + path('M850 27H908L898 64H862Z', DR) + path('M856 27H900Q885 90 856 27Z', RED) + path('M925 27H1000Q950 62 925 27Z', LR) + path('M985 66Q1060 20 1075 30Q1090 40 1100 66Z', LB) + path('M1088 27H1165Q1130 100 1088 27Z', LR) + path('M1105 27H1145Q1128 45 1105 27Z', DR) + path('M1165 66Q1200 30 1236 40V66Z', LB);
    s += path('M669 68H700L712 105H669Z', DB) + path('M672 105Q683 50 700 105Z', STEEL) + path('M710 68H860Q830 100 735 98Z', LR) + path('M912 68H1010Q975 142 940 90Z', LR) + path('M995 105Q1020 55 1070 88L1085 105Z', LB) + path('M1100 68H1195L1185 90Q1150 80 1100 68Z', LR) + path('M1190 105Q1220 50 1236 75V105Z', LB) + path('M1205 105Q1222 60 1236 90V105Z', DB) + path('M725 108H800Q770 135 745 130Z', LR) + path('M788 130Q825 95 862 130Z', LB) + path('M810 130Q828 108 845 130Z', DB) + path('M885 108H1010L980 130H930Z', LR) + path('M1000 130Q1025 85 1050 130Z', DB) + path('M1045 108H1110L1095 130H1060Z', LR) + path('M1055 108H1097L1085 130H1065Z', DR) + path('M1120 108H1185L1160 130Z', LR) + path('M1190 130Q1220 95 1236 120V130Z', DB);
    return s + grid([722, 772, 822, 873, 923, 973, 1025, 1075, 1125, 1175, 1225], [], 669, 24, '#b0b0b033') + line(669, 67, 1236, 67, '#fff', 3) + line(669, 106, 1236, 106, '#fff', 3);
  }
};

document.querySelectorAll('svg[data-chart]').forEach(svg => { svg.innerHTML = charts[svg.dataset.chart](); });
```
